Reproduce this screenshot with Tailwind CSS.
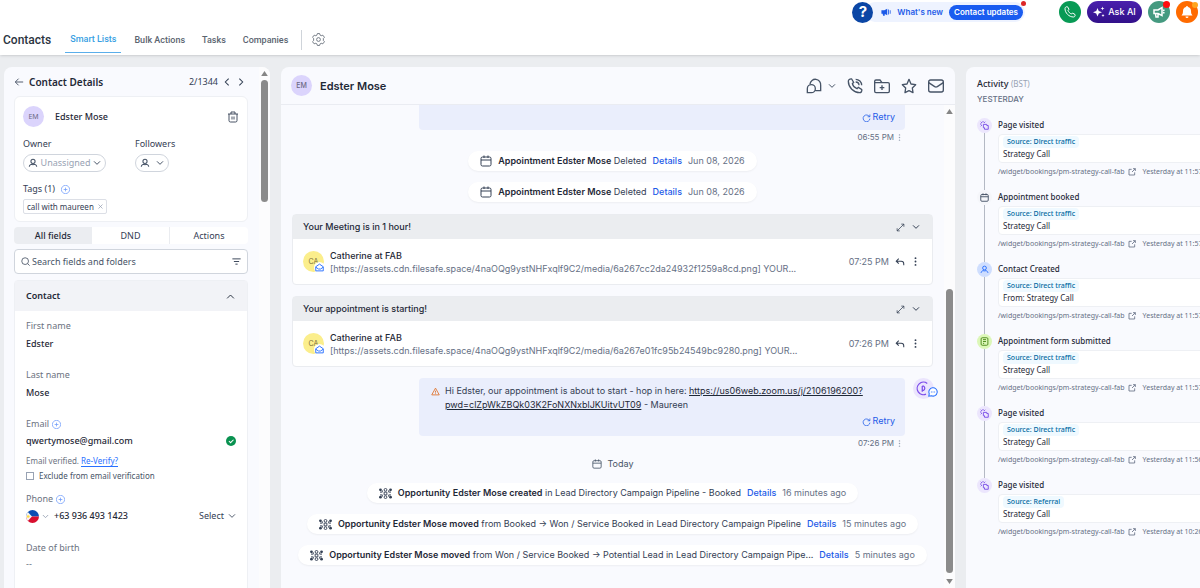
<!DOCTYPE html>
<html lang="en">
<head>
    <meta charset="UTF-8">
    <meta name="viewport" content="width=device-width, initial-scale=1.0">
    <title>Contacts</title>
    <script src="https://cdn.jsdelivr.net/npm/@tailwindcss/browser@4"></script>
</head>
<body class="bg-[#ebedf0] h-screen overflow-hidden flex flex-col font-['Noto_Sans',sans-serif] text-[9px] leading-[14px] text-[#344054]">

    <!-- Shared icons -->
    <svg class="hidden">
        <defs>
            <symbol id="i-down" viewBox="0 0 24 24"><path d="M3 7l9 9 9-9"/></symbol>
            <symbol id="i-up" viewBox="0 0 24 24"><path d="M3 17l9-9 9 9"/></symbol>
            <symbol id="i-left" viewBox="0 0 24 24"><path d="M16 4l-8 8 8 8"/></symbol>
            <symbol id="i-right" viewBox="0 0 24 24"><path d="M8 4l8 8-8 8"/></symbol>
            <symbol id="i-user" viewBox="0 0 24 24"><circle cx="12" cy="8" r="5"/><path d="M3 21c0-3 2-5 5-6 2 1 6 1 8 0 3 1 5 3 5 6"/></symbol>
            <symbol id="i-plus" viewBox="0 0 24 24"><circle cx="12" cy="12" r="11"/><path d="M12 7v10M7 12h10"/></symbol>
            <symbol id="i-calendar" viewBox="0 0 24 24"><rect x="2" y="4" width="20" height="18" rx="3"/><path d="M2 10h20M8 1v5M16 1v5"/></symbol>
            <symbol id="i-expand" viewBox="0 0 24 24"><path d="M14 3h7v7M21 3L3 21M10 21H3v-7"/></symbol>
            <symbol id="i-reply" viewBox="0 0 24 24"><path d="M9 4L3 10l6 6M3 10h12a6 6 0 0 1 6 6v4"/></symbol>
            <symbol id="i-dots" viewBox="0 0 24 24"><g fill="currentColor" stroke="none"><circle cx="12" cy="3" r="2.5"/><circle cx="12" cy="12" r="2.5"/><circle cx="12" cy="21" r="2.5"/></g></symbol>
            <symbol id="i-retry" viewBox="0 0 24 24"><path d="M21 4v6h-6M20 10a9 9 0 1 0 1 5"/></symbol>
            <symbol id="i-mail-open" viewBox="0 0 24 24"><path d="M2 10l10-7 10 7v11H2zM2 11l7 5h6l7-5"/></symbol>
            <symbol id="i-external" viewBox="0 0 24 24"><path d="M11 4H3v17h17v-8M15 2h7v7M22 2L12 12"/></symbol>
            <symbol id="i-click" viewBox="0 0 24 24"><path d="M8 0v4M0 8h4M2 2l3 3M14 2l-3 3M2 14l3-3"/><path d="M9 9h9v3h4v10h-10v-4H9z"/></symbol>
            <symbol id="i-form" viewBox="0 0 24 24"><rect x="3" y="2" width="18" height="20" rx="3"/><path d="M8 7h8M8 12h8M8 17h3"/></symbol>
            <symbol id="i-deal" viewBox="0 0 28 24"><g fill="currentColor" stroke="none"><circle cx="3" cy="4" r="3"/><circle cx="25" cy="4" r="3"/><circle cx="3" cy="20" r="3"/><circle cx="25" cy="20" r="3"/></g><circle cx="14" cy="4" r="3"/><circle cx="14" cy="20" r="3"/><path d="M11 9h6v6h-6zM2 9h5V5M26 9h-5V5M2 15h5v4M26 15h-5v4"/></symbol>
        </defs>
    </svg>

    <!-- Top bar -->
    <header class="bg-white h-[55px] shrink-0 shadow-sm flex flex-col">
        <div class="h-6 flex items-center justify-end pr-[2px] font-[Inter,sans-serif]">
            <button aria-label="Help" class="z-10 size-[21px] rounded-full bg-[#0b46a5] text-white text-[15px] font-bold flex items-center justify-center">?</button>
            <div class="relative bg-[#eef3ff] rounded-full h-5 -ml-2 mr-[34px] pl-4 pr-[2px] flex items-center gap-[6px] text-[8px] font-semibold text-[#1d5be8]">
                <svg class="size-[10px]" viewBox="0 0 24 24" fill="currentColor"><path d="M1 8h7l7-4v16l-7-4H1zM4 16h5v5H5zM17 6h2v12h-2zM21 8h2v8h-2z"/></svg>
                <a href="#">What's new</a>
                <button class="bg-[#1a5cf0] text-white rounded-full h-[15px] px-[5px] leading-[15px]">Contact updates</button>
                <span class="absolute -top-px -right-px size-[5px] rounded-full bg-[#dc2626]"></span>
            </div>
            <button aria-label="Call" class="size-[22px] rounded-full bg-[#089a55] text-white flex items-center justify-center mr-[6px]">
                <svg class="size-3" viewBox="0 0 24 24" fill="none" stroke="currentColor" stroke-width="2"><path d="M8 8.500l2-2-3-5C4 1 2 3 2 5c0 9 8 17 17 17 2 0 4-2 3-5l-5-3-2 2c-3-1-6-4-7-7.500z"/></svg>
            </button>
            <button class="h-[22px] w-[55px] rounded-full bg-linear-to-b from-[#4a20ad] to-[#32108a] text-white font-medium flex items-center justify-center gap-[3px] mr-[6px]">
                <svg class="size-3" viewBox="0 0 24 24" fill="currentColor"><path d="M9 4l2.500 6L18 12.500l-6.500 2.500L9 21l-2.500-6L0 12.500 6.500 10zM19 1l1 3 3 1-3 1-1 3-1-3-3-1 3-1zM20 16l1 2 2 1-2 1-1 2-1-2-2-1 2-1z"/></svg>
                Ask AI
            </button>
            <button aria-label="Announcements" class="relative size-[22px] rounded-full bg-[#459a80] text-white flex items-center justify-center mr-[6px]">
                <svg class="size-3" viewBox="0 0 24 24" fill="none" stroke="currentColor" stroke-width="3"><path d="M2 8h8l8-5v16l-8-4H2zM5 15l1 7h4v-6M20 9l3-1M20 13l3 1"/></svg>
                <span class="absolute top-0 right-0 size-[7px] rounded-full bg-[#ff0d0d]"></span>
            </button>
            <button aria-label="Notifications" class="relative size-[22px] rounded-full bg-[#ff6b00] text-white flex items-center justify-center">
                <svg class="size-3" viewBox="0 0 24 24" fill="currentColor"><path d="M12 0a2 2 0 0 1 2 2c4 1 6 4 6 8 0 5 1 6 3 9H1c2-3 3-4 3-9 0-4 2-7 6-8a2 2 0 0 1 2-2zM9 21h6a3 3 0 0 1-6 0z"/></svg>
                <span class="absolute top-px right-0 size-[6px] rounded-full bg-[#ffa51f]"></span>
            </button>
        </div>
        <nav class="flex-1 flex items-center pl-[3px] font-[Roboto,sans-serif] font-medium text-[#5b6470]">
            <h1 class="text-[12px] text-[#2b3440] mr-[14px]">Contacts</h1>
            <a href="#" class="self-stretch px-[5px] pt-[2px] mb-[2px] flex items-center border-b border-[#5aaeea] text-[#3a9fe3]">Smart Lists</a>
            <a href="#" class="ml-[13px]">Bulk Actions</a>
            <a href="#" class="ml-[17px]">Tasks</a>
            <a href="#" class="ml-[17px]">Companies</a>
            <span class="w-px h-5 bg-[#cfd4da] ml-[13px] mr-[10px]"></span>
            <button aria-label="Settings">
                <svg class="size-[13px]" viewBox="0 0 24 24" fill="none" stroke="currentColor" stroke-width="1.500"><path d="M10 1h4l1 3 2 1 3-1 3 4-2 2v4l2 2-3 4-3-1-2 1-1 3h-4l-1-3-2-1-3 1-3-4 2-2v-4L1 8l3-4 3 1 2-1z"/><circle cx="12" cy="12" r="3.500"/></svg>
            </button>
        </nav>
    </header>

    <main class="flex-1 min-h-0 flex gap-[11px] pt-3 pl-1">

        <!-- Contact details -->
        <aside class="w-[266px] shrink-0 bg-[#f9fafe] rounded-t-lg flex overflow-hidden">
            <div class="flex-1 min-w-0 pl-[10px] pr-[11px]">
                <div class="h-[29px] flex items-center pr-[2px]">
                    <button aria-label="Back"><svg class="size-[10px]" viewBox="0 0 24 24" fill="none" stroke="currentColor" stroke-width="2"><path d="M22 12H4M11 4l-8 8 8 8"/></svg></button>
                    <h2 class="ml-[5px] text-[10px] font-semibold text-[#1f2937]">Contact Details</h2>
                    <span class="ml-auto">2/1344</span>
                    <button aria-label="Previous" class="ml-1"><svg class="size-[10px]" fill="none" stroke="currentColor" stroke-width="2.500"><use href="#i-left"/></svg></button>
                    <button aria-label="Next" class="ml-1"><svg class="size-[10px]" fill="none" stroke="currentColor" stroke-width="2.500"><use href="#i-right"/></svg></button>
                </div>

                <section class="bg-white border border-[#eef0f4] rounded-md h-[126px] px-2 pt-[9px]">
                    <div class="flex items-center">
                        <span class="size-[21px] rounded-full bg-[#dbd4fc] text-[#6b6a85] text-[7px] flex items-center justify-center">EM</span>
                        <h3 class="ml-[11px] font-medium text-[#1f2937]">Edster Mose</h3>
                        <button aria-label="Delete" class="ml-auto"><svg class="size-3" viewBox="0 0 24 24" fill="none" stroke="currentColor" stroke-width="1.800"><path d="M2 6h20M8 6V2h8v4M4 6v13a3 3 0 0 0 3 3h10a3 3 0 0 0 3-3V6M10 11v6M14 11v6"/></svg></button>
                    </div>
                    <div class="flex mt-[10px]">
                        <div class="w-28">
                            <div>Owner</div>
                            <button class="mt-[3px] h-[18px] w-[83px] border border-[#d0d5dd] rounded-full flex items-center justify-between px-1 text-[#98a2b3]">
                                <svg class="size-[10px] text-[#475467]" fill="none" stroke="currentColor" stroke-width="2.500"><use href="#i-user"/></svg>
                                Unassigned
                                <svg class="size-2 text-[#475467]" fill="none" stroke="currentColor" stroke-width="3"><use href="#i-down"/></svg>
                            </button>
                        </div>
                        <div>
                            <div>Followers</div>
                            <button aria-label="Add followers" class="mt-[3px] h-[18px] w-[34px] border border-[#d0d5dd] rounded-full flex items-center justify-between px-1 text-[#475467]">
                                <svg class="size-[10px]" fill="none" stroke="currentColor" stroke-width="2.500"><use href="#i-user"/></svg>
                                <svg class="size-2" fill="none" stroke="currentColor" stroke-width="3"><use href="#i-down"/></svg>
                            </button>
                        </div>
                    </div>
                    <div class="mt-[10px] flex items-center gap-[6px]">
                        Tags (1)
                        <button aria-label="Add tag" class="text-[#6d9bfb]"><svg class="size-[9px]" fill="none" stroke="currentColor" stroke-width="2"><use href="#i-plus"/></svg></button>
                    </div>
                    <span class="mt-[3px] h-[15px] inline-flex items-center gap-1 px-[3px] border border-[#dcdfe6] rounded-xs text-[8px]">call with maureen
                        <button aria-label="Remove tag" class="text-[#98a2b3]"><svg class="size-[5px]" viewBox="0 0 10 10" fill="none" stroke="currentColor" stroke-width="1.500"><path d="M1 1l8 8M9 1l-8 8"/></svg></button>
                    </span>
                </section>

                <div class="mt-[5px] h-[17px] grid grid-cols-3 bg-white rounded-sm overflow-hidden text-center">
                    <button class="bg-[#ebedf1] font-medium text-[#1f2937]">All fields</button>
                    <button class="border-r border-[#eaecf0]">DND</button>
                    <button>Actions</button>
                </div>

                <div class="mt-[5px] h-[25px] bg-white border border-[#d0d5dd] rounded-sm flex items-center px-[6px]">
                    <svg class="size-[9px]" viewBox="0 0 24 24" fill="none" stroke="currentColor" stroke-width="2"><circle cx="11" cy="11" r="9"/><path d="M18 18l5 5"/></svg>
                    <input type="text" aria-label="Search fields and folders" placeholder="Search fields and folders" class="flex-1 min-w-0 ml-[2px] outline-none placeholder:text-[#475467]">
                    <svg class="size-[9px]" viewBox="0 0 24 24" fill="none" stroke="currentColor" stroke-width="2.500"><path d="M1 5h22M5 12h14M9 19h6"/></svg>
                </div>

                <section class="mt-[6px] bg-white border border-[#eef0f4] rounded-t-sm h-[400px]">
                    <button class="w-full h-[30px] bg-[#f2f3f7] flex items-center justify-between pl-[11px] pr-3 font-semibold text-[#1f2937]">Contact
                        <svg class="size-[9px]" fill="none" stroke="currentColor" stroke-width="2.500"><use href="#i-up"/></svg>
                    </button>
                    <div class="px-[11px] pt-2 text-[#6b7280]">
                        <div>First name</div>
                        <div class="mt-1 font-medium text-[#1f2937]">Edster</div>
                        <div class="mt-[17px]">Last name</div>
                        <div class="mt-1 font-medium text-[#1f2937]">Mose</div>
                        <div class="mt-[17px] flex items-center gap-[3px]">Email
                            <button aria-label="Add email" class="text-[#6d9bfb]"><svg class="size-[9px]" fill="none" stroke="currentColor" stroke-width="2"><use href="#i-plus"/></svg></button>
                        </div>
                        <div class="mt-[3px] flex items-center justify-between font-medium text-[#1f2937]">qwertymose@gmail.com
                            <svg class="size-[10px]" viewBox="0 0 24 24"><circle cx="12" cy="12" r="12" fill="#099250"/><path d="M7 12l4 4 7-7" fill="none" stroke="#fff" stroke-width="2.500"/></svg>
                        </div>
                        <div class="mt-[6px] text-[8px]">Email verified. <a href="#" class="text-[#2970ff] border-b border-[#2970ff]">Re-Verify?</a></div>
                        <label class="mt-px flex items-center gap-[5px] text-[8px] text-[#475467]">
                            <input type="checkbox" class="appearance-none size-2 border border-[#98a2b3] bg-white">Exclude from email verification
                        </label>
                        <div class="mt-[9px] flex items-center gap-[3px]">Phone
                            <button aria-label="Add phone" class="text-[#6d9bfb]"><svg class="size-[9px]" fill="none" stroke="currentColor" stroke-width="2"><use href="#i-plus"/></svg></button>
                        </div>
                        <div class="mt-[3px] flex items-center font-medium text-[#1f2937]">
                            <svg class="size-[13px]" viewBox="0 0 24 24"><clipPath id="flag"><circle cx="12" cy="12" r="12"/></clipPath><g clip-path="url(#flag)"><path fill="#0b4db3" d="M0 0h24v12H0z"/><path fill="#d80f2f" d="M0 12h24v12H0z"/><path fill="#f4f4f4" d="M0 0l11 12L0 24z"/><circle cx="4" cy="12" r="2.500" fill="#ffda44"/></g></svg>
                            <svg class="size-[7px] ml-[3px] text-[#98a2b3]" fill="none" stroke="currentColor" stroke-width="3"><use href="#i-down"/></svg>
                            <span class="ml-[5px]">+63 936 493 1423</span>
                            <button class="ml-auto flex items-center gap-1 font-normal text-[#344054]">Select
                                <svg class="size-2" fill="none" stroke="currentColor" stroke-width="2.500"><use href="#i-down"/></svg>
                            </button>
                        </div>
                        <div class="mt-[18px]">Date of birth</div>
                        <div class="mt-[2px]">--</div>
                    </div>
                </section>
            </div>
            <div class="w-[11px] shrink-0 bg-[#fcfcfd] flex flex-col items-center pt-1">
                <svg class="w-[7px] h-[5px]" viewBox="0 0 8 6" fill="#858585"><path d="M4 0l4 6H0z"/></svg>
                <span class="mt-1 w-[7px] h-[122px] rounded-full bg-[#8b8b8b]"></span>
            </div>
        </aside>

        <!-- Conversation -->
        <section class="flex-1 min-w-0 bg-[#f9fafe] rounded-t-lg flex flex-col overflow-hidden font-[Inter,sans-serif]">
            <div class="h-[38px] shrink-0 border-b border-[#eaecf2] flex items-center pl-[10px] pr-[11px] text-[#475467]">
                <span class="size-[21px] rounded-full bg-[#dbd4fc] text-[#6b6a85] text-[7px] font-medium flex items-center justify-center">EM</span>
                <h2 class="ml-2 mr-auto text-[11px] font-semibold text-[#1f2937]">Edster Mose</h2>
                <div class="flex items-center gap-[11px]">
                    <button aria-label="Chat" class="flex items-center gap-[6px]">
                        <svg class="size-4" viewBox="0 0 24 24" fill="none" stroke="currentColor" stroke-width="2"><path d="M6 9a8 8 0 1 1 16 2v8h-8M2 22v-6a6 6 0 1 1 6 6z"/></svg>
                        <svg class="size-2" fill="none" stroke="currentColor" stroke-width="3"><use href="#i-down"/></svg>
                    </button>
                    <button aria-label="Call"><svg class="size-4" viewBox="0 0 24 24" fill="none" stroke="currentColor" stroke-width="2"><path d="M8 8.500l2-2-3-5C4 1 2 3 2 5c0 9 8 17 17 17 2 0 4-2 3-5l-5-3-2 2c-3-1-6-4-7-7.500zM13 2a9 9 0 0 1 9 9M13 6a5 5 0 0 1 5 5"/></svg></button>
                    <button aria-label="Add to folder"><svg class="size-4" viewBox="0 0 24 24" fill="none" stroke="currentColor" stroke-width="2"><path d="M1 7V5a2 2 0 0 1 2-2h6l3 4h9a2 2 0 0 1 2 2v11a2 2 0 0 1-2 2H3a2 2 0 0 1-2-2V7h11M12 11v7M8.500 14.500h7"/></svg></button>
                    <button aria-label="Star"><svg class="size-4" viewBox="0 0 24 24" fill="none" stroke="currentColor" stroke-width="2" stroke-linejoin="round"><path d="M12 2l3 7 7 1-5 5 1 7-6-3-6 3 1-7-5-5 7-1z"/></svg></button>
                    <button aria-label="Email"><svg class="size-4" viewBox="0 0 24 24" fill="none" stroke="currentColor" stroke-width="2"><rect x="1" y="3" width="22" height="18" rx="3"/><path d="M1 7l9 6q2 1 4 0l9-6"/></svg></button>
                </div>
            </div>

            <div class="flex-1 min-h-0 flex">
                <div class="flex-1 min-w-0 overflow-hidden px-[11px] flex flex-col whitespace-nowrap">

                    <!-- Earlier message, scrolled under the header -->
                    <div class="w-[486px] shrink-0 h-[25px] overflow-hidden ml-auto mr-7 bg-[#eaeefc] rounded-b-sm flex flex-col justify-end items-end pr-[10px] pb-[6px]">
                        <p class="self-start shrink-0 pl-[26px] mb-1">Hi Edster, reminder our appointment is starting - our appointment</p>
                        <button class="shrink-0 flex items-center gap-[2px] text-[#1d5be8]"><svg class="size-[9px]" fill="none" stroke="currentColor" stroke-width="2"><use href="#i-retry"/></svg>Retry</button>
                    </div>
                    <div class="mr-[30px] flex items-center justify-end gap-[2px] text-[8px] text-[#667085]">06:55 PM
                        <button aria-label="More" class="text-[#98a2b3]"><svg class="size-[7px]"><use href="#i-dots"/></svg></button>
                    </div>

                    <div class="mt-[7px] shrink-0 self-center h-5 px-3 bg-white rounded-full shadow-xs flex items-center">
                        <svg class="size-3" fill="none" stroke="currentColor" stroke-width="2"><use href="#i-calendar"/></svg>
                        <p class="ml-[6px]"><b class="font-semibold text-[#1f2937]">Appointment Edster Mose</b> Deleted</p>
                        <a href="#" class="ml-[6px] font-medium text-[#1d5be8]">Details</a>
                        <span class="ml-[6px] text-[#667085]">Jun 08, 2026</span>
                    </div>
                    <div class="mt-[11px] shrink-0 self-center h-5 px-3 bg-white rounded-full shadow-xs flex items-center">
                        <svg class="size-3" fill="none" stroke="currentColor" stroke-width="2"><use href="#i-calendar"/></svg>
                        <p class="ml-[6px]"><b class="font-semibold text-[#1f2937]">Appointment Edster Mose</b> Deleted</p>
                        <a href="#" class="ml-[6px] font-medium text-[#1d5be8]">Details</a>
                        <span class="ml-[6px] text-[#667085]">Jun 08, 2026</span>
                    </div>

                    <article class="mt-3 shrink-0 bg-white border border-[#eaecf0] rounded-sm">
                        <div class="h-6 bg-[#ebedf0] flex items-center pl-[10px] pr-3 gap-[7px]">
                            <h3 class="mr-auto font-medium text-[#1f2937]">Your Meeting is in 1 hour!</h3>
                            <button aria-label="Expand"><svg class="size-[9px]" fill="none" stroke="currentColor" stroke-width="2"><use href="#i-expand"/></svg></button>
                            <button aria-label="Collapse"><svg class="size-2" fill="none" stroke="currentColor" stroke-width="3"><use href="#i-down"/></svg></button>
                        </div>
                        <div class="h-[45px] flex items-center pl-[10px] pr-3">
                            <span class="relative size-[21px] rounded-full bg-[#fbee8c] text-[7px] text-[#7a6f3a] flex items-center justify-center">CA
                                <span class="absolute -right-px -bottom-px size-[11px] rounded-full bg-white text-[#2970ff] flex items-center justify-center"><svg class="size-[9px]" fill="none" stroke="currentColor" stroke-width="2.500"><use href="#i-mail-open"/></svg></span>
                            </span>
                            <div class="ml-[6px] mr-auto leading-[13px]">
                                <div class="font-medium text-[#1f2937]">Catherine at FAB</div>
                                <div class="text-[#667085]">[https://assets.cdn.filesafe.space/4naOQg9ystNHFxqlf9C2/media/6a267cc2da24932f1259a8cd.png] YOUR...</div>
                            </div>
                            <time class="text-[#667085]">07:25 PM</time>
                            <button aria-label="Reply" class="ml-[6px]"><svg class="size-[10px]" fill="none" stroke="currentColor" stroke-width="2.500"><use href="#i-reply"/></svg></button>
                            <button aria-label="More" class="ml-[6px]"><svg class="size-[9px]"><use href="#i-dots"/></svg></button>
                        </div>
                    </article>

                    <article class="mt-[11px] shrink-0 bg-white border border-[#eaecf0] rounded-sm">
                        <div class="h-6 bg-[#ebedf0] flex items-center pl-[10px] pr-3 gap-[7px]">
                            <h3 class="mr-auto font-medium text-[#1f2937]">Your appointment is starting!</h3>
                            <button aria-label="Expand"><svg class="size-[9px]" fill="none" stroke="currentColor" stroke-width="2"><use href="#i-expand"/></svg></button>
                            <button aria-label="Collapse"><svg class="size-2" fill="none" stroke="currentColor" stroke-width="3"><use href="#i-down"/></svg></button>
                        </div>
                        <div class="h-[45px] flex items-center pl-[10px] pr-3">
                            <span class="relative size-[21px] rounded-full bg-[#fbee8c] text-[7px] text-[#7a6f3a] flex items-center justify-center">CA
                                <span class="absolute -right-px -bottom-px size-[11px] rounded-full bg-white text-[#2970ff] flex items-center justify-center"><svg class="size-[9px]" fill="none" stroke="currentColor" stroke-width="2.500"><use href="#i-mail-open"/></svg></span>
                            </span>
                            <div class="ml-[6px] mr-auto leading-[13px]">
                                <div class="font-medium text-[#1f2937]">Catherine at FAB</div>
                                <div class="text-[#667085]">[https://assets.cdn.filesafe.space/4naOQg9ystNHFxqlf9C2/media/6a267e01fc95b24549bc9280.png] YOUR...</div>
                            </div>
                            <time class="text-[#667085]">07:26 PM</time>
                            <button aria-label="Reply" class="ml-[6px]"><svg class="size-[10px]" fill="none" stroke="currentColor" stroke-width="2.500"><use href="#i-reply"/></svg></button>
                            <button aria-label="More" class="ml-[6px]"><svg class="size-[9px]"><use href="#i-dots"/></svg></button>
                        </div>
                    </article>

                    <div class="mt-[11px] shrink-0 flex justify-end items-start gap-2 -mr-px">
                        <div class="w-[486px] bg-[#eaeefc] rounded-sm pl-3 pr-[10px] pt-[6px] pb-2 flex flex-col">
                            <div class="flex gap-[5px]">
                                <svg class="size-[9px] mt-[3px] shrink-0 text-[#e07b39]" viewBox="0 0 24 24" fill="none" stroke="currentColor" stroke-width="2.500" stroke-linejoin="round"><path d="M12 3L2 21h20zM12 10v5M12 17v2"/></svg>
                                <p>Hi Edster, our appointment is about to start - hop in here: <a href="#" class="underline text-[#1f2937]">https://us06web.zoom.us/j/2106196200?<br>pwd=clZpWkZBQk03K2FoNXNxblJKUitvUT09</a> - Maureen</p>
                            </div>
                            <button class="mt-[2px] self-end flex items-center gap-[2px] text-[#1d5be8]"><svg class="size-[9px]" fill="none" stroke="currentColor" stroke-width="2"><use href="#i-retry"/></svg>Retry</button>
                        </div>
                        <span class="relative size-[21px] rounded-full bg-[#ebe5fd] text-[#7c4dea]">
                            <svg class="size-[15px] m-[3px]" viewBox="0 0 24 24" fill="none" stroke="currentColor" stroke-width="2"><path d="M18 4a10 10 0 1 0-2 17M10 8v9M10 8h2a4 4 0 0 1 0 7h-2"/></svg>
                            <svg class="absolute -right-1 bottom-[2px] size-[10px] text-[#2970ff]" viewBox="0 0 24 24" fill="#fff" stroke="currentColor" stroke-width="2.500"><path d="M2 22l1-6a10 10 0 1 1 5 5zM7 12h2M11 12h2M15 12h2"/></svg>
                        </span>
                    </div>
                    <div class="mr-[30px] flex items-center justify-end gap-[2px] text-[8px] text-[#667085]">07:26 PM
                        <button aria-label="More" class="text-[#98a2b3]"><svg class="size-[7px]"><use href="#i-dots"/></svg></button>
                    </div>

                    <div class="mt-[7px] shrink-0 self-center flex items-center gap-[6px] px-1 rounded-full text-[#475467]">
                        <svg class="size-[10px]" fill="none" stroke="currentColor" stroke-width="2"><use href="#i-calendar"/></svg>Today
                    </div>

                    <div class="mt-3 shrink-0 self-center h-5 px-3 bg-white rounded-full shadow-xs flex items-center">
                        <svg class="w-[13px] h-[11px]" fill="none" stroke="currentColor" stroke-width="2"><use href="#i-deal"/></svg>
                        <p class="ml-[6px]"><b class="font-semibold text-[#1f2937]">Opportunity Edster Mose created</b> in Lead Directory Campaign Pipeline - Booked</p>
                        <a href="#" class="ml-[6px] font-medium text-[#1d5be8]">Details</a>
                        <span class="ml-[6px] text-[#667085]">16 minutes ago</span>
                    </div>
                    <div class="mt-[11px] shrink-0 self-center h-5 px-3 bg-white rounded-full shadow-xs flex items-center">
                        <svg class="w-[13px] h-[11px]" fill="none" stroke="currentColor" stroke-width="2"><use href="#i-deal"/></svg>
                        <p class="ml-[6px]"><b class="font-semibold text-[#1f2937]">Opportunity Edster Mose moved</b> from Booked → Won / Service Booked in Lead Directory Campaign Pipeline</p>
                        <a href="#" class="ml-[6px] font-medium text-[#1d5be8]">Details</a>
                        <span class="ml-[6px] text-[#667085]">15 minutes ago</span>
                    </div>
                    <div class="mt-[11px] shrink-0 self-center h-5 px-3 bg-white rounded-full shadow-xs flex items-center">
                        <svg class="w-[13px] h-[11px]" fill="none" stroke="currentColor" stroke-width="2"><use href="#i-deal"/></svg>
                        <p class="ml-[6px]"><b class="font-semibold text-[#1f2937]">Opportunity Edster Mose moved</b> from Won / Service Booked → Potential Lead in Lead Directory Campaign Pipe...</p>
                        <a href="#" class="ml-[6px] font-medium text-[#1d5be8]">Details</a>
                        <span class="ml-[6px] text-[#667085]">5 minutes ago</span>
                    </div>
                </div>

                <div class="w-[11px] shrink-0 bg-[#fcfcfd] flex flex-col items-center pt-1 pb-1">
                    <svg class="w-[7px] h-[5px]" viewBox="0 0 8 6" fill="#858585"><path d="M4 0l4 6H0z"/></svg>
                    <span class="mt-auto w-[7px] h-[284px] rounded-full bg-[#8b8b8b]"></span>
                    <svg class="mt-[6px] w-[7px] h-[5px]" viewBox="0 0 8 6" fill="#858585"><path d="M0 0h8L4 6z"/></svg>
                </div>
            </div>
        </section>

        <!-- Activity -->
        <aside class="w-[234px] shrink-0 bg-[#f9fafe] rounded-tl-lg pl-[11px] pt-[10px] overflow-hidden whitespace-nowrap">
            <h2 class="font-medium text-[#1f2937]">Activity <span class="text-[8px] font-normal text-[#98a2b3]">(BST)</span></h2>
            <div class="mt-px font-[Inter,sans-serif] text-[8px] font-medium text-[#667085]">YESTERDAY</div>

            <ol id="timeline" class="mt-3"></ol>
        </aside>
    </main>

    <script>
        const icons = {
            page: ['#i-click', 'bg-[#ece6fd] text-[#7a4ee8]'],
            booked: ['#i-calendar', 'bg-[#f5f6fa] text-[#475467]'],
            created: ['#i-user', 'bg-[#cfdefe] text-[#2970ff]'],
            form: ['#i-form', 'bg-[#dcf7b8] text-[#4c8a1b]']
        };

        const events = [
            ['page', 'Page visited', 'Direct traffic', 'Strategy Call', '11:57 PM'],
            ['booked', 'Appointment booked', 'Direct traffic', 'Strategy Call', '11:57 PM'],
            ['created', 'Contact Created', 'Direct traffic', 'From: Strategy Call', '11:57 PM'],
            ['form', 'Appointment form submitted', 'Direct traffic', 'Strategy Call', '11:57 PM'],
            ['page', 'Page visited', 'Direct traffic', 'Strategy Call', '11:56 PM'],
            ['page', 'Page visited', 'Referral', 'Strategy Call', '10:26 PM']
        ];

        // Each row is an icon with a connecting line, then the event itself
        document.getElementById('timeline').innerHTML = events.map(([type, title, source, name, time], i) => `
            <li class="h-[72px] flex gap-[6px]">
                <div class="flex flex-col items-center">
                    <span class="size-[15px] shrink-0 rounded-full flex items-center justify-center ${icons[type][1]}">
                        <svg class="size-[9px]" fill="none" stroke="currentColor" stroke-width="2.500"><use href="${icons[type][0]}"/></svg>
                    </span>
                    ${i < events.length - 1 ? '<span class="flex-1 w-px bg-[#b4b9c4]"></span>' : ''}
                </div>
                <div class="flex-1">
                    <h3 class="text-[8px] font-medium text-[#1f2937]">${title}</h3>
                    <div class="mt-[2px] h-[29px] bg-white border border-[#eef0f4] rounded-sm pl-1 pt-px">
                        <span class="block w-fit h-3 leading-3 px-1 rounded-sm bg-[#eff9ff] text-[7px] font-medium text-[#026aa2]">Source: ${source}</span>
                        <div class="leading-3 text-[8px] text-[#1f2937]">${name}</div>
                    </div>
                    <div class="mt-[2px] flex items-center gap-[3px] text-[7px] text-[#667085]">
                        <a href="#">/widget/bookings/pm-strategy-call-fab</a>
                        <svg class="size-2" fill="none" stroke="currentColor" stroke-width="2.500"><use href="#i-external"/></svg>
                        <time class="ml-1">Yesterday at ${time}</time>
                    </div>
                </div>
            </li>`).join('');
    </script>
</body>
</html>
